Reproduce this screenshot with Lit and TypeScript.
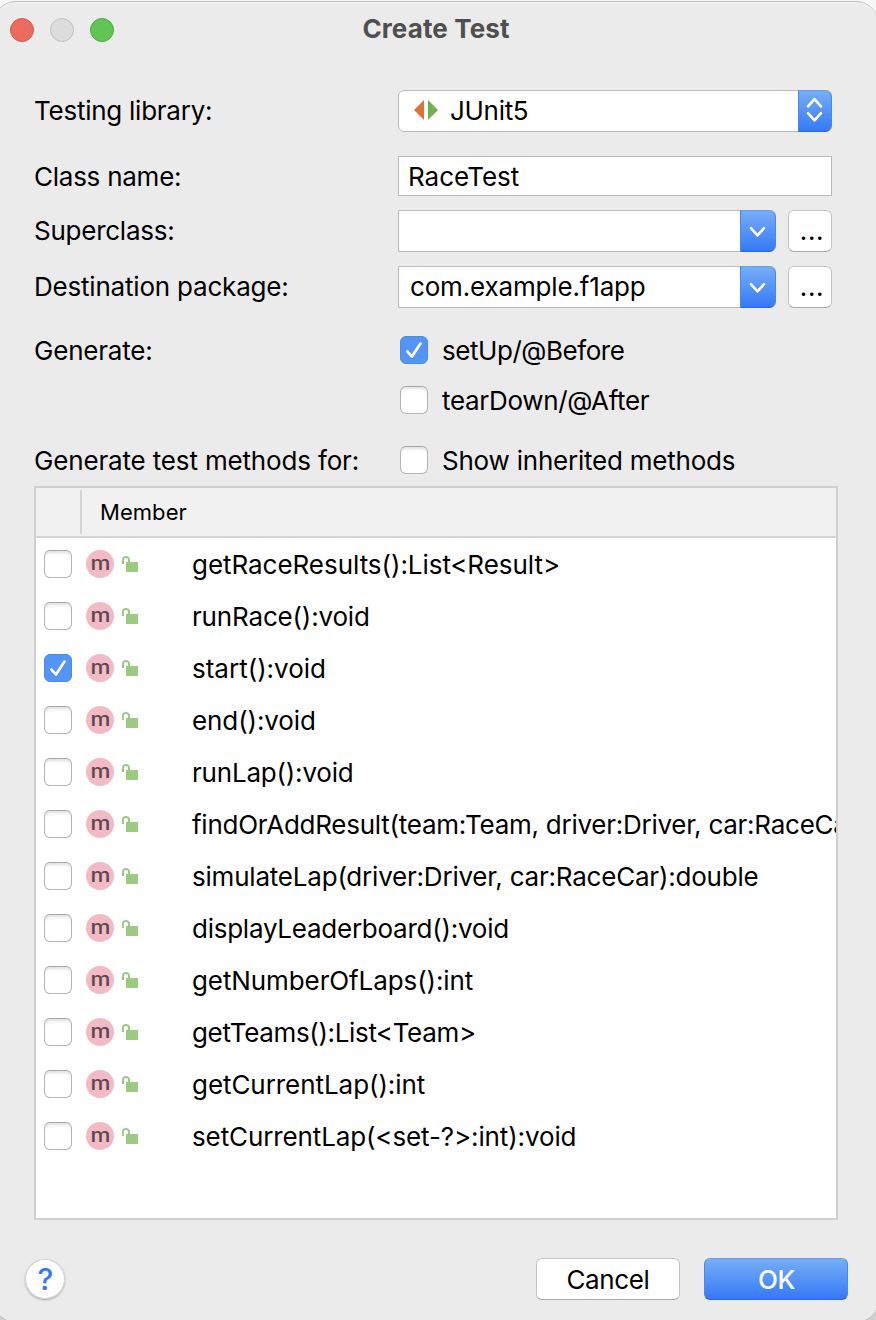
import { LitElement, html, css, svg, nothing } from "lit";
import { customElement, property } from "lit/decorators.js";
import { classMap } from "lit/directives/class-map.js";

/** Text with its own tracking, in pixels per character. */
const tracked = (text: string, track = 0) => html`<span style="letter-spacing:${track}px">${text}</span>`;

@customElement("check-box")
class CheckBox extends LitElement {
  @property({ type: Boolean }) checked = false;
  static styles = css`
    :host { display: block; flex: none; width: 28px; height: 28px; }
    .box {
      box-sizing: border-box; width: 28px; height: 28px; border-radius: 6px;
      border: 1px solid #b4b4b4; border-top-color: #a6a6a6; background: #fff;
      box-shadow: inset 0 3px 3px -1px rgba(0, 0, 0, 0.12);
    }
    .on { border-color: #4a8bec; background: #5494f5; box-shadow: none; }
    svg { display: block; width: 26px; height: 26px; }
    .tick { fill: none; stroke: #fff; stroke-width: 2.8; stroke-linecap: round; stroke-linejoin: round; }
    .shade { fill: none; stroke: #3d78cf; stroke-width: 2.8; stroke-linecap: round; stroke-linejoin: round; }
  `;
  render() {
    return html`<div class=${classMap({ box: true, on: this.checked })}>
      ${this.checked
        ? html`<svg viewBox="0 0 26 26">
            <path class="shade" d="M6.4 15.4 11 20.4 19.5 7.4" opacity=".45" />
            <path class="tick" d="M6.4 14.6 11 19.6 19.5 6.6" />
          </svg>`
        : nothing}
    </div>`;
  }
}

@customElement("member-row")
class MemberRow extends LitElement {
  @property() name = "";
  @property({ type: Number }) track = 0;
  @property({ type: Boolean }) checked = false;
  static styles = css`
    :host { display: flex; align-items: center; height: 52px; padding-left: 8px; white-space: nowrap; }
    .kind {
      flex: none; width: 28px; height: 28px; margin-left: 14px; border-radius: 50%;
      background: #f2bac5; color: #5b464b; text-align: center;
      font: 450 19px/28px "Inter", sans-serif;
    }
    .glyph { display: inline-block; transform: scaleX(1.18); }
    .lock { flex: none; width: 16px; height: 16px; margin-left: 8px; }
    .name { margin-left: 54px; padding-top: 2px; }
  `;
  render() {
    return html`
      <check-box ?checked=${this.checked}></check-box>
      <span class="kind"><span class="glyph">m</span></span>
      <svg class="lock" viewBox="0 0 16 16">
        <rect x="4" y="6" width="12" height="10" fill="#9dca82" />
        <path d="M1 8V3.8a3 2.8 0 0 1 6 0V6" fill="none" stroke="#9dca82" stroke-width="2" />
      </svg>
      <span class="name">${tracked(this.name, this.track)}</span>
    `;
  }
}

const chevron = svg`<path d="M2 2.2 8.5 9.3 15 2.2" fill="none" stroke="#fff" stroke-width="2.6" stroke-linecap="round" stroke-linejoin="round" />`;

@customElement("app-root")
class AppRoot extends LitElement {
  members: [string, number][] = [
    ["getRaceResults():List<Result>", -0.04],
    ["runRace():void", -0.17],
    ["start():void", 0],
    ["end():void", -0.1],
    ["runLap():void", -0.2],
    ["findOrAddResult(team:Team, driver:Driver, car:RaceCar):Result", -0.26],
    ["simulateLap(driver:Driver, car:RaceCar):double", -0.21],
    ["displayLeaderboard():void", -0.25],
    ["getNumberOfLaps():int", -0.1],
    ["getTeams():List<Team>", -0.34],
    ["getCurrentLap():int", -0.06],
    ["setCurrentLap(<set-?>:int):void", -0.12],
  ];
  static styles = css`
    :host {
      display: block; height: 1320px; overflow: hidden;
      font: 26px/32px "Inter", sans-serif; color: #000;
      background: linear-gradient(#f7f7f7 50%, #cfcfcf 50%);
    }
    .window {
      box-sizing: border-box; height: 1322px; margin: 1px -2px 0 -6px; padding: 0 2px 0 6px;
      border: 1px solid #b9b9b9; border-radius: 22px; background: #ebebeb;
      box-shadow: inset 0 1px 0 #f8f8f8; border-left: 0; border-right: 0;
    }
    .titlebar { display: grid; grid-template-columns: 1fr auto 1fr; height: 88px; }
    .lights { display: flex; gap: 16px; padding: 16px 0 0 10px; }
    .light { box-sizing: border-box; width: 24px; height: 24px; border-radius: 50%; border: 1px solid; }
    .close { background: #ec6b5f; border-color: #d8574b; }
    .min { background: #dcdcdc; border-color: #c0c0c0; }
    .zoom { background: #61c554; border-color: #4fa943; }
    .title { padding: 11px 4px 0 0; font-weight: 700; color: #4f4f4f; letter-spacing: 0.12px; }
    .form { display: grid; grid-template-columns: 364px 434px; padding-left: 34px; align-items: center; }
    .r1 { height: 42px; margin-bottom: 24px; }
    .r2 { height: 40px; margin-bottom: 14px; }
    .r3 { height: 42px; margin-bottom: 14px; }
    .r4 { height: 42px; margin-bottom: 28px; }
    .r5 { height: 28px; margin-bottom: 22px; }
    .r6 { height: 28px; margin-bottom: 32px; }
    .r7 { height: 28px; margin-bottom: 12px; }
    .label { display: flex; align-items: center; }
    .low { padding-top: 2px; box-sizing: border-box; }
    .field { box-sizing: border-box; display: flex; align-items: center; background: #fff; border: 1px solid #bababa; }
    .select { border-radius: 6px; padding-left: 15px; }
    .select .text { flex: 1; padding-left: 12px; }
    .junit { width: 24px; height: 20px; margin-bottom: 2px; }
    .input { padding-left: 9px; }
    .combo { flex: 1; border-radius: 0 6px 6px 0; height: 42px; padding-left: 11px; }
    .combo .text { flex: 1; }
    .drop {
      box-sizing: border-box; flex: none; display: flex; align-items: center; justify-content: center;
      width: 36px; height: 42px; margin: -1px; padding-right: 2px; border-radius: 0 7px 7px 0;
      border: 1px solid #4687f3; border-top-color: #5f9fee; border-bottom-color: #2464f0;
      background: linear-gradient(#77aef6, #3579f6);
    }
    .one { padding-top: 1px; }
    .wide { width: 34px; padding-bottom: 2px; }
    .pair { display: flex; gap: 12px; }
    .more, .btn {
      box-sizing: border-box; height: 42px; border: 1px solid #c4c4c4; border-bottom-color: #a8a8a8;
      border-radius: 6px; background: #fff; text-align: center;
    }
    .more { width: 44px; line-height: 40px; letter-spacing: 0.6px; padding-left: 4px; }
    .opt { display: flex; align-items: center; gap: 14px; padding-left: 2px; }
    .table { box-sizing: border-box; width: 804px; height: 734px; margin-left: 34px; border: 2px solid #cfcfcf; background: #fff; overflow: hidden; }
    .head { display: flex; box-sizing: border-box; height: 50px; border-bottom: 2px solid #d4d4d4; background: #f1f1f1; }
    .rule { width: 2px; height: 44px; margin: 2px 0 0 44px; background: #d4d4d4; }
    .member { padding-left: 18px; font-size: 22px; line-height: 49px; letter-spacing: 0.05px; }
    .foot { display: flex; padding: 38px 28px 0 25px; }
    .help {
      width: 40px; height: 40px; margin-right: auto; margin-top: 1px; border-radius: 50%; background: #fff;
      box-shadow: inset 0 0 0 1px #cfcfcf, 0 1px 2px rgba(0, 0, 0, 0.3); box-sizing: border-box; padding-left: 1px;
      color: #3478f6; text-align: center; font-size: 30px; font-weight: 500; line-height: 40px;
    }
    .btn { width: 144px; line-height: 41px; letter-spacing: -0.35px; }
    .ok { margin-left: 24px; padding-left: 1px; color: #fff; font-weight: 500; border-color: #4687f3; border-top-color: #5f9fee; border-bottom-color: #2464f0; background: linear-gradient(#77aef6, #3579f6); }
  `;
  render() {
    const drop = html`<span class="drop one"><svg width="17" height="12" viewBox="0 0 17 12">${chevron}</svg></span>`;
    return html`
      <div class="window">
        <div class="titlebar">
          <div class="lights">
            <span class="light close"></span><span class="light min"></span><span class="light zoom"></span>
          </div>
          <div class="title">Create Test</div>
        </div>
        <div class="form">
          <span class="label r1">${tracked("Testing library:", -0.25)}</span>
          <div class="field select r1">
            <svg class="junit" viewBox="0 0 24 20">
              <path d="M10 0V20L0 10Z" fill="#e1703a" /><path d="M14 0V20L24 10Z" fill="#70b152" />
            </svg>
            <span class="text">${tracked("JUnit5", -0.3)}</span>
            <span class="drop wide">
              <svg width="17" height="26" viewBox="0 0 17 26">
                <g transform="matrix(1 0 0 -1 0 11.5)">${chevron}</g>
                <g transform="translate(0 14)">${chevron}</g>
              </svg>
            </span>
          </div>
          <span class="label low r2">${tracked("Class name:", -0.25)}</span>
          <div class="field input low r2">${tracked("RaceTest")}</div>
          <span class="label r3">${tracked("Superclass:", -0.25)}</span>
          <div class="pair r3"><div class="field combo"><span class="text"></span>${drop}</div><div class="more">...</div></div>
          <span class="label r4">${tracked("Destination package:", -0.2)}</span>
          <div class="pair r4"><div class="field combo"><span class="text">${tracked("com.example.f1app", -0.16)}</span>${drop}</div><div class="more">...</div></div>
          <span class="label low r5">${tracked("Generate:", -0.2)}</span>
          <div class="opt r5"><check-box checked></check-box><span class="low">${tracked("setUp/@Before", -0.45)}</span></div>
          <span class="label r6"></span>
          <div class="opt r6"><check-box></check-box><span class="low">${tracked("tearDown/@After", -0.35)}</span></div>
          <span class="label low r7">${tracked("Generate test methods for:", -0.16)}</span>
          <div class="opt r7"><check-box></check-box><span class="low">${tracked("Show inherited methods", -0.22)}</span></div>
        </div>
        <div class="table">
          <div class="head"><span class="rule"></span><span class="member">Member</span></div>
          ${this.members.map(([name, track], i) => html`<member-row .name=${name} .track=${track} ?checked=${i === 2}></member-row>`)}
        </div>
        <div class="foot">
          <div class="help">?</div>
          <div class="btn">Cancel</div>
          <div class="btn ok">OK</div>
        </div>
      </div>
    `;
  }
}
